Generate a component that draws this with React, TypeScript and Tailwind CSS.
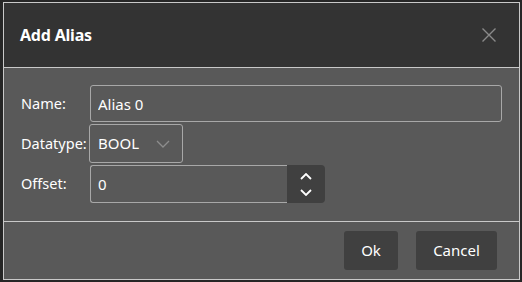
import React, { useState } from 'react';

const font = { fontFamily: '"Noto Sans", "Open Sans", sans-serif' };

const ChevronDown: React.FC<{ className?: string }> = ({ className }) => (
    <svg viewBox="0 0 14 8" className={className} fill="none" stroke="currentColor" strokeWidth="1.3">
        <path d="M1 1l6 6 6-6" />
    </svg>
);

const App: React.FC = () => {
    const [name, setName] = useState('Alias 0');
    const [offset, setOffset] = useState(0);

    return (
        <div className="w-[522px] h-[282px] bg-[#262626] pt-[2px] pl-[3px] overflow-hidden" style={font}>
            <div className="w-[517px] h-[278px] border border-[#c9c9c9] flex flex-col text-white">
                <div className="h-[65px] shrink-0 bg-[#333333] border-b border-[#c9c9c9] flex items-center justify-between pl-[16px] pr-[22px]">
                    <span className="text-[16px] font-bold tracking-[-0.2px]">Add Alias</span>
                    <button className="text-[#8a8a8a]">
                        <svg viewBox="0 0 16 16" className="w-[16px] h-[16px]" fill="none" stroke="currentColor" strokeWidth="1.4">
                            <path d="M1.5 1.5l13 13M14.5 1.5l-13 13" />
                        </svg>
                    </button>
                </div>
                <div className="h-[154px] shrink-0 bg-[#595959] border-b border-[#c9c9c9] pt-[17px] pl-[17px] pr-[16px] flex flex-col gap-[2px]">
                    <div className="flex items-center">
                        <label className="w-[69px] text-[14.5px]">Name:</label>
                        <input
                            value={name}
                            onChange={(e) => setName(e.target.value)}
                            className="w-[412px] h-[37px] bg-transparent border border-[#a8a8a8] rounded-[3px] px-[7px] text-[15px] text-white outline-none"
                        />
                    </div>
                    <div className="flex items-center">
                        <label className="w-[68px] text-[14.5px] whitespace-nowrap">Datatype:</label>
                        <div className="w-[94px] h-[39px] border border-[#a8a8a8] rounded-[3px] flex items-center justify-between pl-[8px] pr-[12px]">
                            <span className="text-[15px]">BOOL</span>
                            <ChevronDown className="w-[14px] h-[8px] text-[#8d8d8d]" />
                        </div>
                    </div>
                    <div className="flex items-center">
                        <label className="w-[69px] text-[14.5px]">Offset:</label>
                        <input
                            value={offset}
                            onChange={(e) => setOffset(Number(e.target.value) || 0)}
                            className="w-[197px] h-[38px] bg-transparent border border-[#a8a8a8] border-r-0 rounded-l-[3px] px-[7px] text-[15px] text-white outline-none"
                        />
                        <div className="w-[38px] h-[38px] bg-[#404040] rounded-r-[4px] flex flex-col items-center justify-center gap-[9px]">
                            <button onClick={() => setOffset((o) => o + 1)}>
                                <svg viewBox="0 0 12 7" className="w-[12px] h-[7px] block" fill="none" stroke="currentColor" strokeWidth="1.8">
                                    <path d="M1 6l5-5 5 5" />
                                </svg>
                            </button>
                            <button onClick={() => setOffset((o) => o - 1)}>
                                <svg viewBox="0 0 12 7" className="w-[12px] h-[7px] block" fill="none" stroke="currentColor" strokeWidth="1.8">
                                    <path d="M1 1l5 5 5-5" />
                                </svg>
                            </button>
                        </div>
                    </div>
                </div>
                <div className="flex-1 bg-[#595959] flex items-center justify-end gap-[18px] pr-[22px]">
                    <button className="w-[54px] h-[39px] bg-[#404040] rounded-[3px] text-[15px]">Ok</button>
                    <button className="w-[81px] h-[39px] bg-[#404040] rounded-[3px] text-[15px]">Cancel</button>
                </div>
            </div>
        </div>
    );
};

export default App;
